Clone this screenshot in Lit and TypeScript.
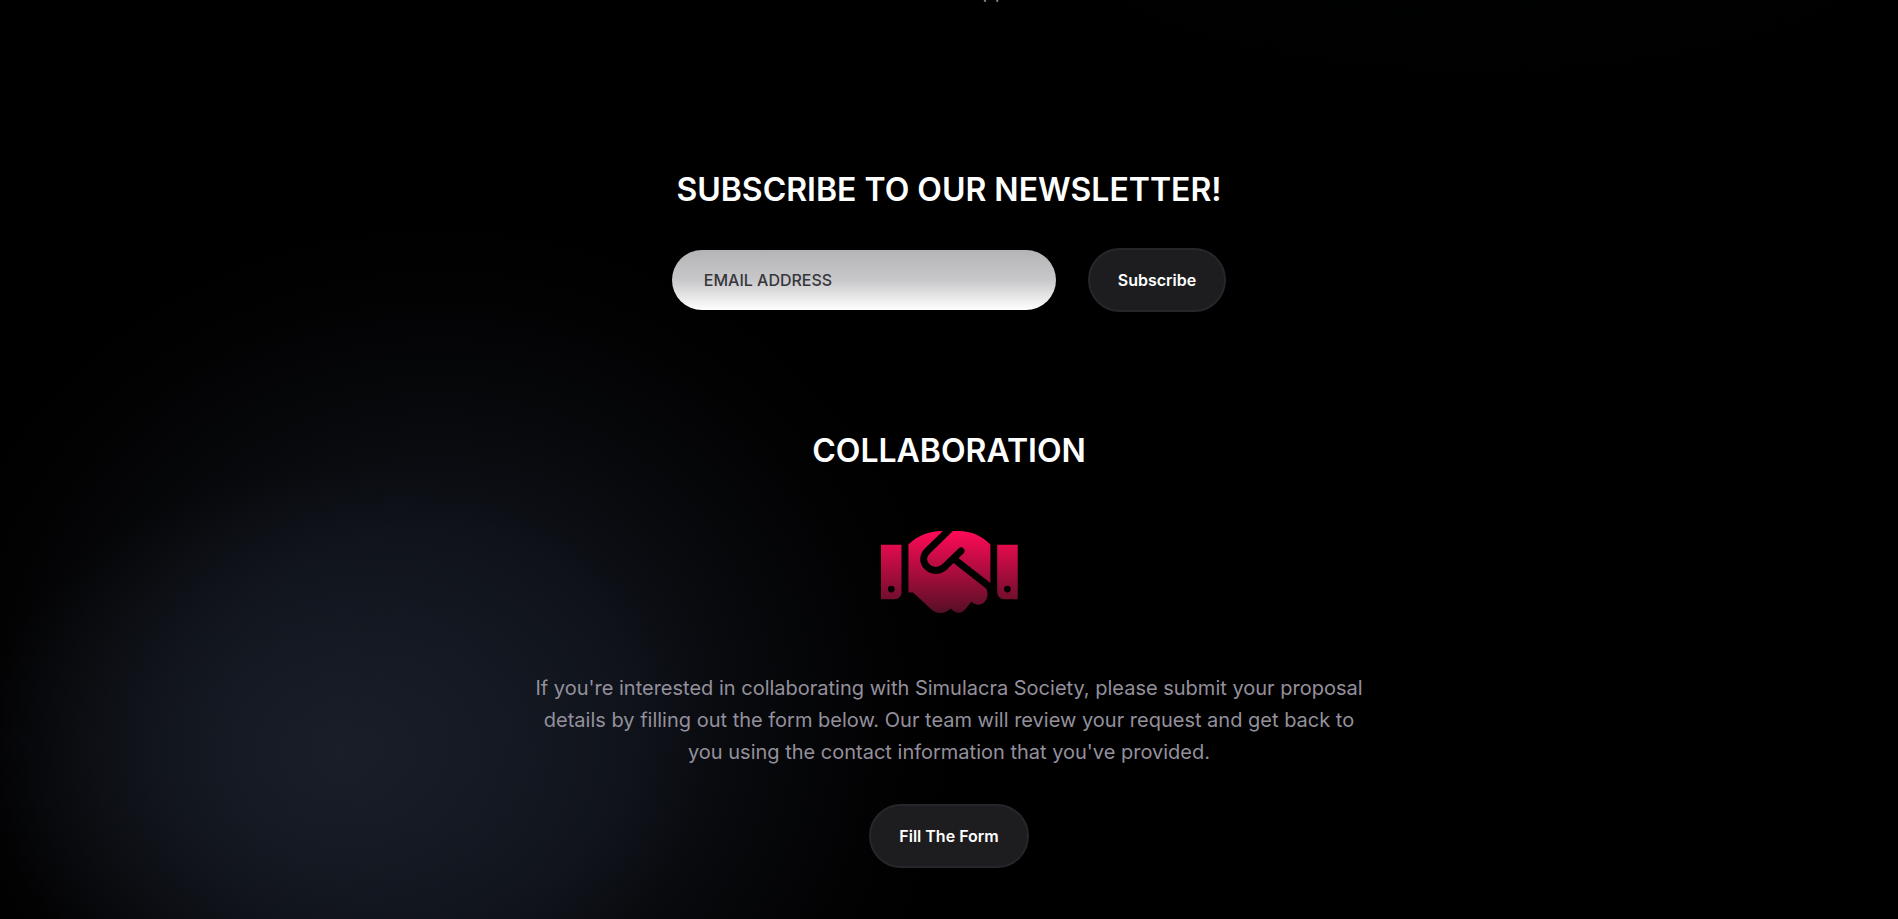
import { LitElement, html, css } from "lit";
import { customElement } from "lit/decorators.js";

@customElement("handshake-icon")
class HandshakeIcon extends LitElement {
  static styles = css`
    :host { display: block; }
    svg { display: block; width: 137px; height: 82px; }
  `;
  render() {
    return html`<svg viewBox="0 0 137 82" aria-hidden="true">
      <defs>
        <linearGradient id="g" gradientUnits="userSpaceOnUse" x1="0" y1="0" x2="0" y2="82">
          <stop offset="0" stop-color="#ff0a56" />
          <stop offset="1" stop-color="#560f25" />
        </linearGradient>
        <mask id="m" maskUnits="userSpaceOnUse" x="0" y="0" width="137" height="82">
          <rect width="137" height="82" fill="#fff" />
          <path d="M70 -3L46.600 19.800C41.500 24.800 41.500 31 46 35.600C51 40.800 58.500 40.600 64 35.600L80 20M73 28L112 58.500" fill="none" stroke="#000" stroke-width="7" stroke-linecap="round" stroke-linejoin="round" />
        </mask>
      </defs>
      <path fill="url(#g)" fill-rule="evenodd" d="M0 13.700H20.500V61.500A6.800 6.800 0 0 1 13.700 68.300H0ZM10.300 54.700a3.400 3.400 0 1 0 0 6.800a3.400 3.400 0 1 0 0 -6.800Z" />
      <path fill="url(#g)" fill-rule="evenodd" d="M136.700 13.700H116.200V61.500A6.800 6.800 0 0 0 123 68.300H136.700ZM126.400 54.700a3.400 3.400 0 1 0 0 6.800a3.400 3.400 0 1 0 0 -6.800Z" />
      <path fill="url(#g)" mask="url(#m)" d="M27.400 13.500C36 5 48 0 61 0H78C90 0 101 5 109.400 13.500V55L105 57C107.500 62 107 68 103 71.500C99.500 74.500 94 74.500 90.500 70.500L84 78.500C80 83 75 83 70 77.500L66.500 80C62 83 55 82.500 51 79L32 61.500H27.400Z" />
    </svg>`;
  }
}

@customElement("app-root")
class AppRoot extends LitElement {
  static styles = css`
    :host {
      display: block;
      min-height: 100vh;
      overflow: hidden;
      box-sizing: border-box;
      font-family: Inter, sans-serif;
      color: #fff;
      background:
        radial-gradient(ellipse 19vw 31vh at 18% 82%, rgb(27 31 42 / 0.9), rgb(23 28 38 / 0.7) 40%, rgb(14 18 27 / 0) 100%),
        radial-gradient(ellipse 28vw 55vh at 23% 78%, #10141d, #0d1017 38%, #07080b 62%, #020203 84%, #000 100%),
        radial-gradient(ellipse 32vw 26vh at 78% -12%, #010203, #000 100%),
        #000;
      background-blend-mode: normal, lighten, normal;
    }
    main { display: flex; flex-direction: column; align-items: center; text-align: center; }
    p { margin: 0; max-width: 832px; font-size: 20px; line-height: 32px; color: #94909c; }
    .lead { margin-top: -25px; }
    section { display: flex; flex-direction: column; align-items: center; }
    h2 { margin: 0; font-size: 32px; line-height: 40px; font-weight: 600; text-transform: uppercase; }
    .news { padding-top: 163px; }
    form { display: flex; align-items: center; gap: 32px; margin-top: 38px; }
    input {
      box-sizing: border-box; width: 384px; height: 60px; padding: 0 32px;
      border: 0; border-radius: 30px;
      background: linear-gradient(#b4b4b6, #c8c8ca 50%, #fff);
      font: 500 16px/24px Inter, sans-serif; color: #36363b;
    }
    input::placeholder { color: #36363b; opacity: 1; }
    .btn {
      box-sizing: border-box; height: 64px; padding: 0 28px;
      display: flex; align-items: center;
      border: 2px solid #26262b; border-radius: 32px; background: #1d1d1f;
      font: 600 16px/24px Inter, sans-serif; color: #fff; text-decoration: none;
    }
    .collab { padding-top: 119px; }
    handshake-icon { margin: 60px 0 59px; }
    .fill { margin-top: 36px; }
  `;
  render() {
    return html`<main>
      <p class="lead">We can't wait to see what will happen next into that world!</p>
      <section class="news">
        <h2>Subscribe to our newsletter!</h2>
        <form @submit=${(e: Event) => e.preventDefault()}>
          <input type="email" aria-label="Email address" placeholder="EMAIL ADDRESS" />
          <button class="btn" type="submit">Subscribe</button>
        </form>
      </section>
      <section class="collab">
        <h2>Collaboration</h2>
        <handshake-icon></handshake-icon>
        <p>If you're interested in collaborating with Simulacra Society, please submit your proposal details by filling out the form below. Our team will review your request and get back to you using the contact information that you've provided.</p>
        <a class="btn fill" href="#form">Fill The Form</a>
      </section>
    </main>`;
  }
}
